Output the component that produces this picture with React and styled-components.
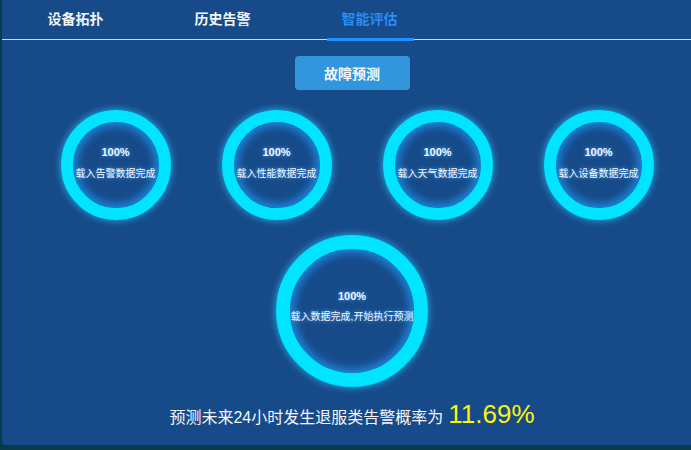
import React from 'react'
import styled, { createGlobalStyle } from 'styled-components';

const GlobalStyle = createGlobalStyle`
    html, body {
        margin: 0;
        padding: 0;
        background: #083a4a;
        overflow: hidden;
        font-family: "Liberation Sans", "Noto Sans CJK SC", sans-serif;
    }
`;

const Panel = styled.div`
    margin-left: 2px;
    width: 700px;
    height: 445px;
    background: #174a88;
    border-bottom-left-radius: 4px;
    display: flex;
    flex-direction: column;
    align-items: center;
`;

const TabBar = styled.div`
    align-self: stretch;
    display: flex;
    height: 39px;
    border-bottom: 1px solid #d6d9de;
`;

const Tab = styled.div`
    position: relative;
    width: 147px;
    display: flex;
    justify-content: center;
    align-items: center;
    padding-bottom: 3px;
    box-sizing: border-box;
    font-size: 14px;
    font-weight: bold;
    color: ${({active}) => (active ? '#2a8ef2' : '#f2f5fa')};

    &::after {
        content: '';
        display: ${({active}) => (active ? 'block' : 'none')};
        position: absolute;
        left: 31px;
        right: 29px;
        bottom: -2px;
        height: 3px;
        background: #2190ff;
    }
`;

const PredictButton = styled.button`
    margin-top: 16px;
    width: 115px;
    height: 34px;
    border: none;
    border-radius: 4px;
    background: #3196dc;
    color: #f4f8fc;
    font-family: inherit;
    font-size: 14px;
    font-weight: bold;
`;

const CircleRow = styled.div`
    margin-top: 20px;
    padding-left: 10px;
    display: flex;
`;

const Slot = styled.div`
    width: 161px;
    display: flex;
    justify-content: center;
`;

const Ring = styled.div`
    width: ${({size}) => size}px;
    height: ${({size}) => size}px;
    box-sizing: border-box;
    padding-bottom: ${({big}) => (big ? '10px' : '5px')};
    border-radius: 50%;
    border: ${({thick}) => thick}px solid #00e4ff;
    box-shadow: 0 0 7px 1px rgba(40, 200, 255, 0.7), inset 0 0 8px 4px #1d86dc;
    display: flex;
    flex-direction: column;
    justify-content: center;
    align-items: center;
    gap: ${({big}) => (big ? '6px' : '7px')};
    color: #f4f8ff;
    text-shadow: 0 0 4px #4aa8ff;
`;

const Percent = styled.div`
    font-size: 11px;
    font-weight: bold;
`;

const Label = styled.div`
    font-size: 10px;
    white-space: nowrap;
`;

const BigRow = styled.div`
    margin-top: 15px;
`;

const Result = styled.div`
    margin-top: 12px;
    display: flex;
    align-items: baseline;
    gap: 5px;
    color: #f4f6fb;
    font-size: 16px;
`;

const Rate = styled.span`
    color: #f8f800;
    font-size: 26px;
`;

const steps = ['载入告警数据完成', '载入性能数据完成', '载入天气数据完成', '载入设备数据完成'];

const App = () => {
    return (
        <>
        <GlobalStyle />
        <Panel>
            <TabBar>
                <Tab>设备拓扑</Tab>
                <Tab>历史告警</Tab>
                <Tab active>智能评估</Tab>
            </TabBar>
            <PredictButton>故障预测</PredictButton>
            <CircleRow>
                {steps.map(s => (
                    <Slot key={s}>
                        <Ring size={110} thick={12}>
                            <Percent>100%</Percent>
                            <Label>{s}</Label>
                        </Ring>
                    </Slot>
                ))}
            </CircleRow>
            <BigRow>
                <Ring size={152} thick={14} big>
                    <Percent>100%</Percent>
                    <Label>载入数据完成,开始执行预测</Label>
                </Ring>
            </BigRow>
            <Result>
                预测未来24小时发生退服类告警概率为
                <Rate>11.69%</Rate>
            </Result>
        </Panel>
        </>
    );
}

export default App
